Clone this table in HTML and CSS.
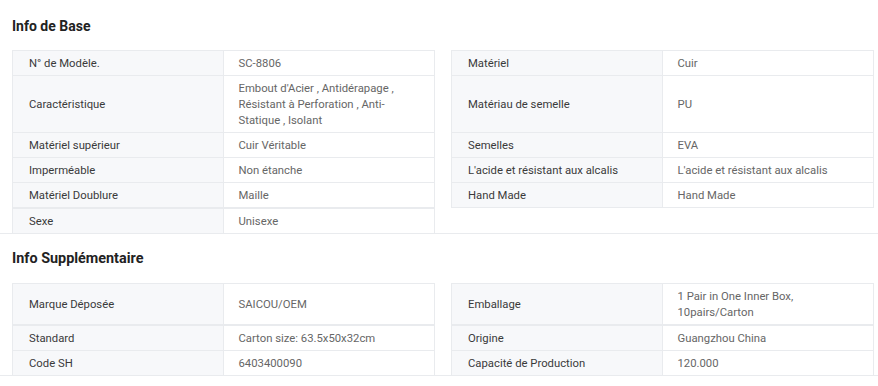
FILE: index.html
```html
<!DOCTYPE html>
<html lang="fr">
<head>
<meta charset="utf-8">
<title>Info</title>
<link rel="stylesheet" href="styles.css">
</head>
<body>
<section class="section">
  <h2 class="title">Info de Base</h2>
  <div class="grid">
    <div class="pair first"><div class="label">N° de Modèle.</div><div class="value">SC-8806</div></div>
    <div class="pair first"><div class="label">Matériel</div><div class="value">Cuir</div></div>
    <div class="pair"><div class="label">Caractéristique</div><div class="value">Embout d'Acier , Antidérapage , Résistant à Perforation , Anti-Statique , Isolant</div></div>
    <div class="pair"><div class="label">Matériau de semelle</div><div class="value">PU</div></div>
    <div class="pair"><div class="label">Matériel supérieur</div><div class="value">Cuir Véritable</div></div>
    <div class="pair"><div class="label">Semelles</div><div class="value">EVA</div></div>
    <div class="pair"><div class="label">Imperméable</div><div class="value">Non étanche</div></div>
    <div class="pair"><div class="label">L'acide et résistant aux alcalis</div><div class="value">L'acide et résistant aux alcalis</div></div>
    <div class="pair"><div class="label">Matériel Doublure</div><div class="value">Maille</div></div>
    <div class="pair"><div class="label">Hand Made</div><div class="value">Hand Made</div></div>
    <div class="pair split last"><div class="label">Sexe</div><div class="value">Unisexe</div></div>
  </div>
</section>
<section class="section">
  <h2 class="title title-next">Info Supplémentaire</h2>
  <div class="grid">
    <div class="pair first"><div class="label">Marque Déposée</div><div class="value">SAICOU/OEM</div></div>
    <div class="pair first"><div class="label">Emballage</div><div class="value">1 Pair in One Inner Box, 10pairs/Carton</div></div>
    <div class="pair split"><div class="label">Standard</div><div class="value">Carton size: 63.5x50x32cm</div></div>
    <div class="pair split"><div class="label">Origine</div><div class="value">Guangzhou China</div></div>
    <div class="pair last"><div class="label">Code SH</div><div class="value">6403400090</div></div>
    <div class="pair last"><div class="label">Capacité de Production</div><div class="value">120.000</div></div>
  </div>
</section>
</body>
</html>
```
FILE: styles.css
```css
* { box-sizing: border-box; }
html, body { margin: 0; padding: 0; background: #fff; }
body {
  font-family: Roboto, "Liberation Sans", Arial, sans-serif;
  font-size: 11.3px;
  color: #333;
}
.section {
  border-bottom: 1px solid #e9ebee;
}
.title {
  margin: 0;
  padding: 15px 12px 13px;
  height: 50px;
  line-height: 22px;
  font-size: 14px;
  font-weight: 700;
  color: #222;
}
.title-next { height: 49px; padding-top: 14px; padding-bottom: 13px; font-size: 14.4px; }
.grid {
  display: grid;
  grid-template-columns: 1fr 1fr;
  column-gap: 16px;
  padding: 0 4px 0 12px;
}
.pair {
  display: flex;
  border-left: 1px solid #e9ebee;
  border-right: 1px solid #e9ebee;
  border-bottom: 1px solid #e9ebee;
  line-height: 16px;
}
.pair.first { border-top: 1px solid #e9ebee; }
.pair.split { border-top: 1px solid #e9ebee; }
.pair.last { border-bottom: none; }
.label {
  flex: 0 0 50%;
  display: flex;
  align-items: center;
  padding: 5px 16px 3px;
  background: #f7f8fa;
  border-right: 1px solid #e9ebee;
  color: #3a3a3a;
}
.value {
  flex: 1 1 auto;
  display: flex;
  align-items: center;
  padding: 5px 16px 3px 15px;
  color: #666;
}
```
